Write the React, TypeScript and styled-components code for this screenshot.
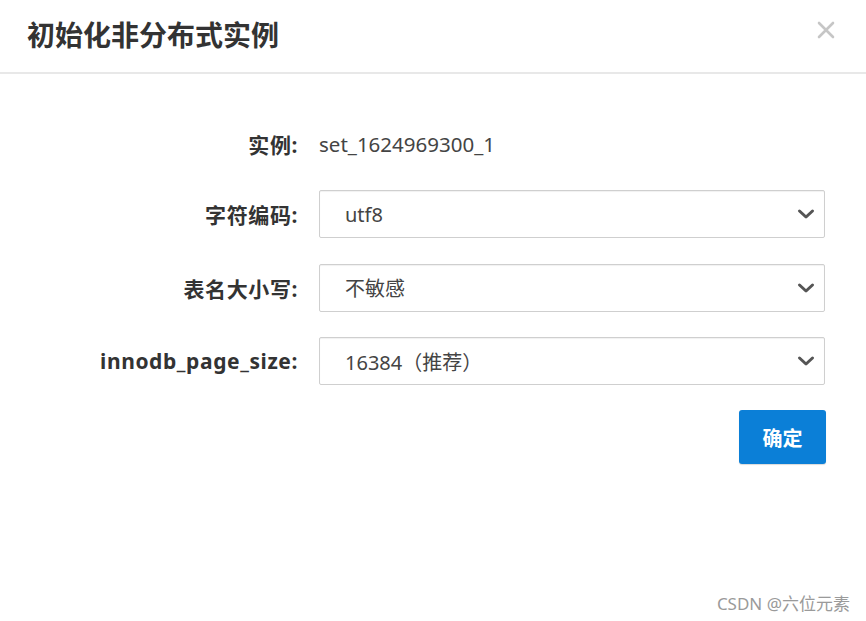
import React from "react";
import styled, { createGlobalStyle } from "styled-components";

const Global = createGlobalStyle`
  html, body { margin: 0; padding: 0; background: #fff; }
  body { font-family: "Noto Sans", "Noto Sans CJK SC", sans-serif; }
  #root { width: 866px; height: 621px; }
`;

const Dialog = styled.div`
  position: relative;
  width: 866px;
  height: 621px;
  background: #fff;
  display: flex;
  flex-direction: column;
  overflow: hidden;
`;

const Header = styled.div`
  height: 74px;
  box-sizing: border-box;
  border-bottom: 2px solid #e8e8e8;
  display: flex;
  align-items: center;
  justify-content: space-between;
  padding: 0 30px 4px 27px;
`;

const Title = styled.h1`
  margin: 0;
  font-size: 28px;
  font-weight: 700;
  color: #333;
  letter-spacing: 0;
  font-family: "Noto Sans CJK SC", sans-serif;
`;

const Close = styled.button`
  border: 0;
  background: none;
  padding: 0;
  width: 20px;
  height: 20px;
  margin-bottom: 8px;
  display: flex;
  align-items: center;
  justify-content: center;
  cursor: pointer;
`;

const Form = styled.div`
  display: grid;
  grid-template-columns: 298px 506px;
  grid-template-rows: 42px 48px 48px 48px;
  column-gap: 21px;
  row-gap: 25.5px;
  padding-top: 48.5px;
  align-items: center;
`;

const Label = styled.div`
  text-align: right;
  font-size: 21px;
  font-weight: 700;
  letter-spacing: 0.6px;
  color: #333;
  white-space: nowrap;
`;

const Value = styled.div`
  font-size: 20.5px;
  color: #444;
`;

const SelectBox = styled.div`
  height: 48px;
  box-sizing: border-box;
  border: 1px solid #cfcfcf;
  border-radius: 2px;
  box-shadow: inset 0 1px 1px rgba(0,0,0,0.06);
  display: flex;
  align-items: center;
  justify-content: space-between;
  padding: 0 9px 0 25px;
  font-size: 20px;
  color: #444;
`;

const Actions = styled.div`
  display: flex;
  justify-content: flex-end;
  padding: 25px 40px 0 0;
`;

const Button = styled.button`
  width: 87px;
  height: 54px;
  border: 0;
  border-radius: 3px;
  background: #0b7fd7;
  color: #fff;
  font-size: 20px;
  font-weight: 700;
  font-family: "Noto Sans CJK SC", sans-serif;
  box-shadow: 0 1px 1px rgba(0,0,0,0.15);
`;

const Watermark = styled.div`
  position: absolute;
  right: 16px;
  bottom: 6px;
  font-size: 17px;
  color: #9a9a9a;
`;

const Chevron = () => (
  <svg width="18" height="12" viewBox="0 0 18 12">
    <path d="M2.5 3 L9 9 L15.5 3" fill="none" stroke="#555" strokeWidth="3" strokeLinecap="round" strokeLinejoin="round" />
  </svg>
);

const Select = ({ value }: { value: string }) => (
  <SelectBox>
    <span>{value}</span>
    <Chevron />
  </SelectBox>
);

export default function App() {
  return (
    <>
      <Global />
      <Dialog>
        <Header>
          <Title>初始化非分布式实例</Title>
          <Close aria-label="close">
            <svg width="18" height="18" viewBox="0 0 18 18">
              <path d="M2 2 L16 16 M16 2 L2 16" stroke="#c6c6c6" strokeWidth="2.6" strokeLinecap="round" />
            </svg>
          </Close>
        </Header>
        <Form>
          <Label>实例:</Label>
          <Value>set_1624969300_1</Value>
          <Label>字符编码:</Label>
          <Select value="utf8" />
          <Label>表名大小写:</Label>
          <Select value="不敏感" />
          <Label>innodb_page_size:</Label>
          <Select value="16384（推荐）" />
        </Form>
        <Actions>
          <Button>确定</Button>
        </Actions>
        <Watermark>CSDN @六位元素</Watermark>
      </Dialog>
    </>
  );
}
